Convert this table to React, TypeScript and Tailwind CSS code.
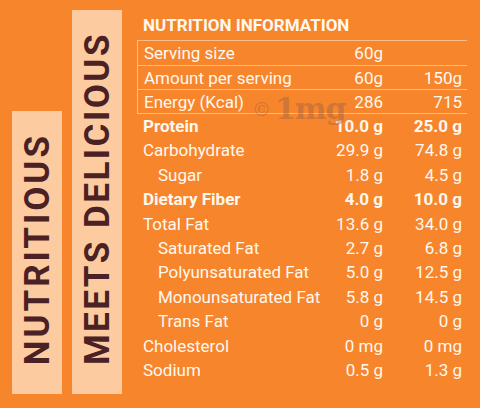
import React from "react";

type Row = { label: string; a: string; b: string; bold?: boolean; indent?: boolean };

const boxed: Row[] = [
  { label: "Serving size", a: "60g", b: "" },
  { label: "Amount per serving", a: "60g", b: "150g" },
  { label: "Energy (Kcal)", a: "286", b: "715" },
];

const rows: Row[] = [
  { label: "Protein", a: "10.0 g", b: "25.0 g", bold: true },
  { label: "Carbohydrate", a: "29.9 g", b: "74.8 g" },
  { label: "Sugar", a: "1.8 g", b: "4.5 g", indent: true },
  { label: "Dietary Fiber", a: "4.0 g", b: "10.0 g", bold: true },
  { label: "Total Fat", a: "13.6 g", b: "34.0 g" },
  { label: "Saturated Fat", a: "2.7 g", b: "6.8 g", indent: true },
  { label: "Polyunsaturated Fat", a: "5.0 g", b: "12.5 g", indent: true },
  { label: "Monounsaturated Fat", a: "5.8 g", b: "14.5 g", indent: true },
  { label: "Trans Fat", a: "0 g", b: "0 g", indent: true },
  { label: "Cholesterol", a: "0 mg", b: "0 mg" },
  { label: "Sodium", a: "0.5 g", b: "1.3 g" },
];

function Line({ r, className }: { r: Row; className: string }) {
  return (
    <div
      className={`grid grid-cols-[minmax(0,1fr)_80px_79px] items-center whitespace-nowrap pr-[5px] ${
        r.bold ? "font-bold" : "font-normal"
      } ${className}`}
    >
      <span className={r.indent ? "pl-[21px]" : "pl-[6px]"}>{r.label}</span>
      <span className="text-right">{r.a}</span>
      <span className="text-right">{r.b}</span>
    </div>
  );
}

export default function App() {
  return (
    <div className="w-[480px] h-[408px] bg-[#F7852B] flex font-['Roboto',sans-serif] overflow-hidden">
      <div className="flex items-end gap-[10px] pl-[12px] pb-[14px] w-[137px] shrink-0">
        <div className="w-[50px] h-[283px] bg-[#FDCBA0] flex justify-center items-end pb-[29px]">
          <span className="[writing-mode:vertical-rl] rotate-180 text-[35px] leading-none font-bold tracking-[3px] text-[#4A2124]">
            NUTRITIOUS
          </span>
        </div>
        <div className="w-[50px] h-[384px] bg-[#FDCBA0] flex justify-center items-end pb-[29px]">
          <span className="[writing-mode:vertical-rl] rotate-180 text-[35px] leading-none font-bold tracking-[2.5px] text-[#4A2124]">
            MEETS DELICIOUS
          </span>
        </div>
      </div>

      <div className="relative w-[330px] pt-[10px] text-[17px] text-[#FFF8F0]">
        <div className="h-[30px] flex items-center pl-[6px] font-bold pt-[2px]">
          NUTRITION INFORMATION
        </div>
        <div className="border-l border-[#FBBD86]">
          {boxed.map((r, i) => (
            <Line
              key={r.label}
              r={r}
              className={`border-t border-[#FBBD86] ${i === 0 ? "h-[25px]" : "h-[24px]"}`}
            />
          ))}
        </div>
        <div className="border-t border-[#FBBD86]">
          {rows.map((r) => (
            <Line key={r.label} r={r} className="h-[24.4px]" />
          ))}
        </div>
        <div className="absolute left-[115px] top-[94px] flex items-center gap-[4px] text-[#9A6448]/45 font-['DejaVu_Serif',serif] font-bold pointer-events-none">
          <span className="text-[19px] font-normal">©</span>
          <span className="text-[30px] leading-none tracking-[-1px]">1mg</span>
        </div>
      </div>
    </div>
  );
}
